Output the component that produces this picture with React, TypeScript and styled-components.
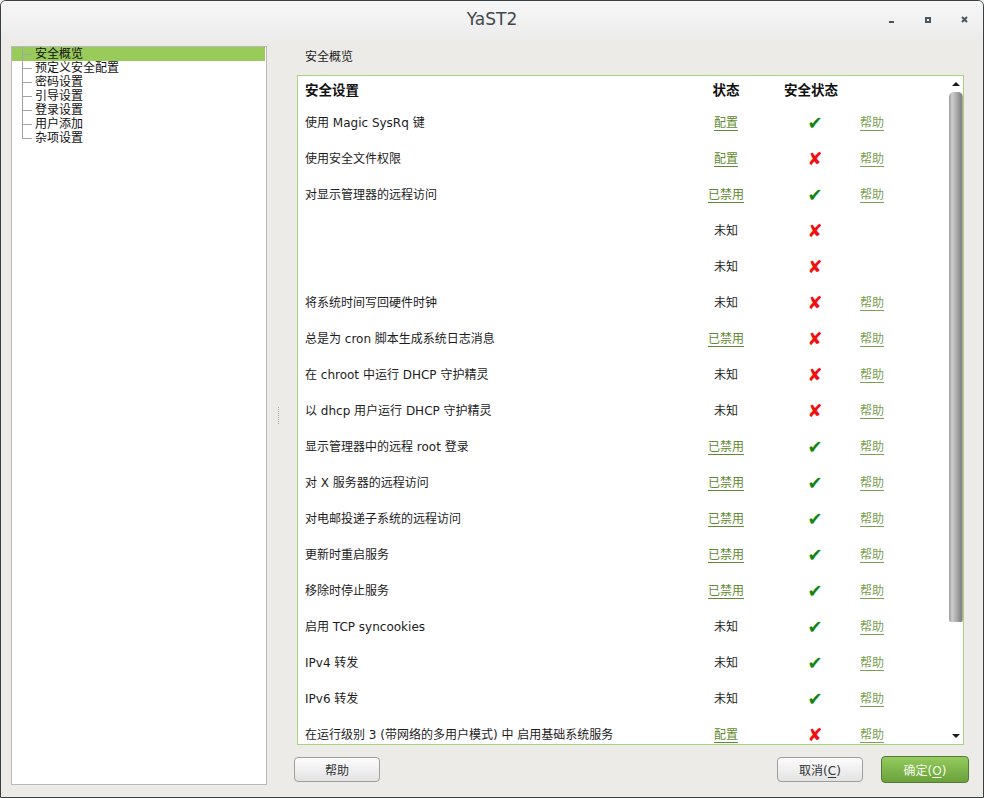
import React from 'react';
import styled, { createGlobalStyle } from 'styled-components';

const FONT = `"DejaVu Sans", "Noto Sans CJK SC", sans-serif`;

const GlobalStyle = createGlobalStyle`
  html, body {
    margin: 0;
    padding: 0;
    width: 984px;
    height: 798px;
    overflow: hidden;
    background: #edebe7;
  }
  body {
    font-family: ${FONT};
    font-size: 12px;
    color: #1c1c1c;
  }
  * { box-sizing: border-box; }
`;

const Window = styled.div`
  width: 984px;
  height: 798px;
  border: 1px solid #3a3f42;
  border-radius: 6px 6px 0 0;
  background: #edebe7;
  display: flex;
  flex-direction: column;
  overflow: hidden;
`;

const TitleBar = styled.div`
  height: 37px;
  flex: none;
  display: grid;
  grid-template-columns: 1fr auto 1fr;
  align-items: center;
  background: linear-gradient(#f7f7f7, #ececec);
`;

const Title = styled.div`
  grid-column: 2;
  font-size: 17px;
  color: #42484d;
  padding-bottom: 2px;
`;

const Controls = styled.div`
  grid-column: 3;
  justify-self: end;
  display: flex;
  padding-right: 1px;
`;

const Control = styled.span`
  width: 36px;
  height: 20px;
  display: flex;
  align-items: center;
  justify-content: center;
  color: #4b555e;
`;

const Body = styled.div`
  flex: 1;
  min-height: 0;
  display: flex;
  padding: 8px 19px 12px 10px;
`;

const Tree = styled.div`
  width: 256px;
  flex: none;
  background: #fff;
  border: 1px solid #b9b9b9;
  padding: 0 1px 0 0;
`;

const TreeRow = styled.div<{ $selected?: boolean }>`
  height: 14px;
  display: flex;
  align-items: center;
  padding-left: 10px;
  background: ${({ $selected }) => ($selected ? '#99cb5b' : 'transparent')};
  font-size: 12px;
  line-height: 14px;
  color: #111;
`;

const Guide = styled.span<{ $last?: boolean }>`
  width: 13px;
  height: 14px;
  flex: none;
  background:
    linear-gradient(#a3a3a3, #a3a3a3) 0 0 / 1px ${({ $last }) => ($last ? '8px' : '100%')} no-repeat,
    linear-gradient(#a3a3a3, #a3a3a3) 0 7px / 10px 1px no-repeat;
`;

const Splitter = styled.div`
  width: 30px;
  flex: none;
  display: flex;
  align-items: center;
  padding-left: 11px;
`;

const Grip = styled.div`
  width: 1px;
  height: 17px;
  border-left: 1px dotted #a4a4a4;
`;

const Pane = styled.div`
  flex: 1;
  min-width: 0;
  display: flex;
  flex-direction: column;
`;

const PaneLabel = styled.div`
  height: 29px;
  padding: 4px 0 0 8px;
  line-height: 14px;
  font-size: 12px;
`;

const TableBox = styled.div`
  height: 670px;
  flex: none;
  border: 1px solid #a6d57f;
  background: #fff;
  display: flex;
`;

const TableScroll = styled.div`
  flex: 1;
  min-width: 0;
  overflow: hidden;
`;

const Grid = styled.div<{ $head?: boolean }>`
  display: grid;
  grid-template-columns: 383px 90px 88px 1fr;
  align-items: center;
  height: ${({ $head }) => ($head ? '27px' : '36px')};
  padding-bottom: ${({ $head }) => ($head ? '1px' : '0')};
`;

const HeadCell = styled.div<{ $center?: boolean; $shift?: number }>`
  font-weight: bold;
  font-size: 13.5px;
  color: #111;
  text-align: ${({ $center }) => ($center ? 'center' : 'left')};
  padding-left: ${({ $center }) => ($center ? '0' : '7px')};
  padding-right: ${({ $shift }) => ($shift ? `${$shift}px` : '0')};
`;

const NameCell = styled.div`
  padding-left: 7px;
  white-space: nowrap;
`;

const StatusCell = styled.div`
  text-align: center;
`;

const MarkCell = styled.div`
  display: flex;
  justify-content: center;
  padding-top: 3px;
`;

const HelpCell = styled.div`
  padding-left: 1px;
`;

const Link = styled.span<{ $faded?: boolean }>`
  color: ${({ $faded }) => ($faded ? '#78a052' : '#5f8a2f')};
  text-decoration: underline;
  text-underline-offset: 3px;
  text-decoration-thickness: 1px;
`;

const Mark = styled.span<{ $ok: boolean }>`
  font-family: "DejaVu Sans", sans-serif;
  font-size: 18px;
  line-height: 18px;
  color: ${({ $ok }) => ($ok ? '#12860f' : '#f01010')};
`;

const Scrollbar = styled.div`
  width: 15px;
  flex: none;
  display: flex;
  flex-direction: column;
`;

const ArrowBox = styled.div`
  height: 16px;
  flex: none;
  display: flex;
  align-items: center;
  justify-content: center;
`;

const Arrow = styled.span<{ $down?: boolean }>`
  width: 0;
  height: 0;
  border-left: 4px solid transparent;
  border-right: 4px solid transparent;
  ${({ $down }) =>
    $down ? 'border-top: 4px solid #1a1a1a;' : 'border-bottom: 4px solid #1a1a1a;'}
`;

const Thumb = styled.div`
  height: 530px;
  flex: none;
  width: 14px;
  margin-left: 1px;
  border-radius: 5px 5px 2px 2px;
  background: linear-gradient(
    to right,
    #9c9c9c,
    #cdcdcd 22%,
    #aaaaaa 55%,
    #808080 88%,
    #b8b8b8
  );
`;

const Track = styled.div`
  flex: 1;
`;

const ButtonRow = styled.div`
  display: flex;
  justify-content: space-between;
  align-items: center;
  height: 27px;
  margin: 11px -5px 0 -3px;
`;

const ButtonGroup = styled.div`
  display: flex;
  align-items: center;
  gap: 18px;
`;

const Button = styled.button<{ $primary?: boolean }>`
  font-family: ${FONT};
  font-size: 12px;
  width: ${({ $primary }) => ($primary ? '88px' : '86px')};
  height: ${({ $primary }) => ($primary ? '27px' : '25px')};
  border-radius: 4px;
  padding: 0;
  border: 1px solid ${({ $primary }) => ($primary ? '#56783c' : '#9e9e9e')};
  background: ${({ $primary }) =>
    $primary ? 'linear-gradient(#93cb5d, #6aa13a)' : 'linear-gradient(#fcfcfc, #e3e3e3)'};
  color: ${({ $primary }) => ($primary ? '#f3faec' : '#2e3436')};
  u { text-underline-offset: 2px; }
`;

type Status = { text: string; link: boolean };
type Row = { name: string; status: Status; ok: boolean; help: boolean };

const cfg: Status = { text: '配置', link: true };
const off: Status = { text: '已禁用', link: true };
const unk: Status = { text: '未知', link: false };

const rows: Row[] = [
  { name: '使用 Magic SysRq 键', status: cfg, ok: true, help: true },
  { name: '使用安全文件权限', status: cfg, ok: false, help: true },
  { name: '对显示管理器的远程访问', status: off, ok: true, help: true },
  { name: '', status: unk, ok: false, help: false },
  { name: '', status: unk, ok: false, help: false },
  { name: '将系统时间写回硬件时钟', status: unk, ok: false, help: true },
  { name: '总是为 cron 脚本生成系统日志消息', status: off, ok: false, help: true },
  { name: '在 chroot 中运行 DHCP 守护精灵', status: unk, ok: false, help: true },
  { name: '以 dhcp 用户运行 DHCP 守护精灵', status: unk, ok: false, help: true },
  { name: '显示管理器中的远程 root 登录', status: off, ok: true, help: true },
  { name: '对 X 服务器的远程访问', status: off, ok: true, help: true },
  { name: '对电邮投递子系统的远程访问', status: off, ok: true, help: true },
  { name: '更新时重启服务', status: off, ok: true, help: true },
  { name: '移除时停止服务', status: off, ok: true, help: true },
  { name: '启用 TCP syncookies', status: unk, ok: true, help: true },
  { name: 'IPv4 转发', status: unk, ok: true, help: true },
  { name: 'IPv6 转发', status: unk, ok: true, help: true },
  { name: '在运行级别 3 (带网络的多用户模式) 中 启用基础系统服务', status: cfg, ok: false, help: true },
];

const treeItems = ['安全概览', '预定义安全配置', '密码设置', '引导设置', '登录设置', '用户添加', '杂项设置'];

const App: React.FC = () => {
  return (
    <>
      <GlobalStyle />
      <Window>
        <TitleBar>
          <Title>YaST2</Title>
          <Controls>
            <Control>
              <svg width="6" height="6" viewBox="0 0 6 6">
                <rect x="0" y="4" width="5" height="2" fill="currentColor" />
              </svg>
            </Control>
            <Control>
              <svg width="6" height="6" viewBox="0 0 6 6">
                <rect x="1" y="1" width="4" height="4" fill="none" stroke="currentColor" strokeWidth="2" />
              </svg>
            </Control>
            <Control>
              <svg width="7" height="7" viewBox="0 0 7 7">
                <path d="M1 1L6 6M6 1L1 6" stroke="currentColor" strokeWidth="2" />
              </svg>
            </Control>
          </Controls>
        </TitleBar>

        <Body>
          <Tree>
            {treeItems.map((item, i) => (
              <TreeRow key={item} $selected={i === 0}>
                <Guide $last={i === treeItems.length - 1} />
                {item}
              </TreeRow>
            ))}
          </Tree>

          <Splitter>
            <Grip />
          </Splitter>

          <Pane>
            <PaneLabel>安全概览</PaneLabel>
            <TableBox>
              <TableScroll>
                <Grid $head>
                  <HeadCell>安全设置</HeadCell>
                  <HeadCell $center>状态</HeadCell>
                  <HeadCell $center $shift={8}>安全状态</HeadCell>
                  <div />
                </Grid>
                {rows.map((row, i) => (
                  <Grid key={i}>
                    <NameCell>{row.name}</NameCell>
                    <StatusCell>
                      {row.status.link ? <Link>{row.status.text}</Link> : row.status.text}
                    </StatusCell>
                    <MarkCell>
                      <Mark $ok={row.ok}>{row.ok ? '✔' : '✘'}</Mark>
                    </MarkCell>
                    <HelpCell>{row.help && <Link $faded>帮助</Link>}</HelpCell>
                  </Grid>
                ))}
              </TableScroll>
              <Scrollbar>
                <ArrowBox>
                  <Arrow />
                </ArrowBox>
                <Thumb />
                <Track />
                <ArrowBox>
                  <Arrow $down />
                </ArrowBox>
              </Scrollbar>
            </TableBox>

            <ButtonRow>
              <Button>帮助</Button>
              <ButtonGroup>
                <Button>
                  取消(<u>C</u>)
                </Button>
                <Button $primary>
                  确定(<u>O</u>)
                </Button>
              </ButtonGroup>
            </ButtonRow>
          </Pane>
        </Body>
      </Window>
    </>
  );
};

export default App;
